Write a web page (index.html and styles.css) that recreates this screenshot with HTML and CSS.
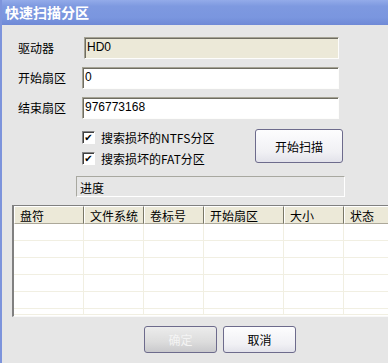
FILE: index.html
```html
<!DOCTYPE html>
<html lang="zh-CN">
<head>
    <meta charset="UTF-8">
    <title>快速扫描分区</title>
    <link rel="stylesheet" href="styles.css">
</head>
<body>

<div class="janela">
    <div class="titulo">快速扫描分区</div>

    <div class="conteudo">
        <!-- Campos -->
        <div class="campos">
            <label class="rotulo">驱动器</label>
            <div class="caixa somente-leitura">HD0</div>

            <label class="rotulo">开始扇区</label>
            <div class="caixa">0</div>

            <label class="rotulo">结束扇区</label>
            <div class="caixa">976773168</div>
        </div>

        <!-- Opções e botão -->
        <div class="opcoes">
            <div class="marcas">
                <div class="marca"><span class="quadro">&#10004;</span>搜索损坏的NTFS分区</div>
                <div class="marca"><span class="quadro">&#10004;</span>搜索损坏的FAT分区</div>
            </div>
            <button class="botao botao-scan">开始扫描</button>
        </div>

        <div class="progresso">进度</div>
    </div>

    <!-- Tabela -->
    <div class="tabela">
        <div class="cabecalho">
            <div class="col c1">盘符</div>
            <div class="col c2">文件系统</div>
            <div class="col c3">卷标号</div>
            <div class="col c4">开始扇区</div>
            <div class="col c5">大小</div>
            <div class="col c6">状态</div>
        </div>
        <div class="linha"><div class="c1"></div><div class="c2"></div><div class="c3"></div><div class="c4"></div><div class="c5"></div><div class="c6"></div></div>
        <div class="linha"><div class="c1"></div><div class="c2"></div><div class="c3"></div><div class="c4"></div><div class="c5"></div><div class="c6"></div></div>
        <div class="linha"><div class="c1"></div><div class="c2"></div><div class="c3"></div><div class="c4"></div><div class="c5"></div><div class="c6"></div></div>
        <div class="linha"><div class="c1"></div><div class="c2"></div><div class="c3"></div><div class="c4"></div><div class="c5"></div><div class="c6"></div></div>
        <div class="linha"><div class="c1"></div><div class="c2"></div><div class="c3"></div><div class="c4"></div><div class="c5"></div><div class="c6"></div></div>
        <div class="linha curta"><div class="c1"></div><div class="c2"></div><div class="c3"></div><div class="c4"></div><div class="c5"></div><div class="c6"></div></div>
    </div>

    <div class="rodape">
        <button class="botao desativado">确定</button>
        <button class="botao">取消</button>
    </div>
</div>

</body>
</html>
```

FILE: styles.css
```css
/* Estilos gerais */
body {
    margin: 0;
    font-family: "Noto Sans CJK SC", "DejaVu Sans", sans-serif;
    font-size: 12px;
    color: #000;
    background: #e6e6e6;
}

.janela {
    width: 386px;
    height: 363px;
    border-left: 2px solid #7d94dc;
    background: #e6e6e6;
    overflow: hidden;
}

/* Barra de título */
.titulo {
    height: 25px;
    line-height: 24px;
    padding-left: 5px;
    color: #fff;
    font-weight: bold;
    font-size: 14px;
    background: linear-gradient(to bottom, #93abe9 0%, #7e99e0 25%, #7a96df 70%, #6f89d6 100%);
    margin-left: -2px;
}

.conteudo {
    padding: 12px 0 0 16px;
}

/* Campos */
.campos {
    display: grid;
    grid-template-columns: 64px 257px;
    row-gap: 8px;
    align-items: center;
}

.rotulo {
    line-height: 22px;
}

.caixa {
    height: 22px;
    box-sizing: border-box;
    line-height: 18px;
    padding-left: 2px;
    background: #fff;
    border: 1px solid;
    border-color: #a5a394 #fdfdfb #fdfdfb #a5a394;
    box-shadow: inset 1px 1px 0 #6f6d62;
    font-family: "Liberation Sans", "Noto Sans CJK SC", sans-serif;
    font-size: 12px;
}

.somente-leitura {
    background: #ece9d8;
    margin-left: 2px;
}

/* Opções */
.opcoes {
    display: flex;
    margin-top: 8px;
    margin-left: 64px;
    width: 261px;
    justify-content: space-between;
}

.marcas {
    display: flex;
    flex-direction: column;
    gap: 4px;
    padding-top: 2px;
}

.marca {
    display: flex;
    align-items: center;
    height: 17px;
}

.quadro {
    width: 11px;
    height: 11px;
    margin-right: 6px;
    background: #fff;
    border: 1px solid;
    border-color: #858585 #fff #fff #858585;
    box-shadow: inset 1px 1px 0 #404040;
    font-size: 10px;
    line-height: 12px;
    text-align: center;
    font-weight: bold;
    font-family: "DejaVu Sans", sans-serif;
}

.botao {
    font-family: "Noto Sans CJK SC", sans-serif;
    font-size: 12px;
    color: #000;
    background: linear-gradient(to bottom, #fdfdfe, #f0f0f4 70%, #e2e2ea);
    border: 1px solid #6d6b8c;
    border-radius: 3px;
    padding: 0;
    cursor: pointer;
}

.botao-scan {
    width: 88px;
    height: 34px;
    margin-top: 2px;
}

.progresso {
    width: 269px;
    height: 21px;
    box-sizing: border-box;
    margin: 9px 0 0 58px;
    padding: 2px 0 0 3px;
    border: 1px solid;
    border-color: #a8a8a0 #fff #fff #a8a8a0;
}

/* Tabela */
.tabela {
    margin: 8px 0 0 10px;
    height: 110px;
    background: #fff;
    border-top: 1px solid #808080;
    border-left: 2px solid #808080;
    border-bottom: 1px solid #f8f8f8;
    overflow: hidden;
}

.cabecalho,
.linha {
    display: flex;
}

.cabecalho {
    height: 18px;
    line-height: 17px;
}

.col {
    box-sizing: border-box;
    background: #ece9d8;
    padding-left: 5px;
    border-top: 1px solid #fff;
    border-left: 1px solid #fff;
    border-right: 1px solid #7a7868;
    border-bottom: 1px solid #aca899;
}

.cabecalho > div,
.linha > div {
    flex-shrink: 0;
}

.c1 { width: 70px; }
.c2 { width: 60px; }
.c3 { width: 60px; }
.c4 { width: 80px; }
.c5 { width: 60px; }
.c6 { width: 60px; }

.linha {
    height: 17px;
}

.linha > div {
    box-sizing: border-box;
    border-right: 1px solid #f1efe2;
    border-bottom: 1px solid #f1efe2;
}

.linha.curta {
    height: 6px;
}

/* Rodapé */
.rodape {
    display: flex;
    gap: 6px;
    margin: 9px 0 0 142px;
}

.rodape .botao {
    width: 73px;
    height: 27px;
}

.desativado {
    color: #f4f4f4;
    background: linear-gradient(to bottom, #ececec, #dcdcdc 60%, #c9c9cc);
}
```
